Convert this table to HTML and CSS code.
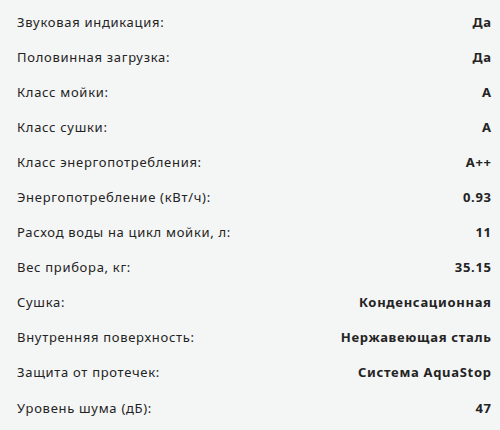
FILE: index.html
```html
<!DOCTYPE html>
<html lang="ru">
<head>
<meta charset="utf-8">
<link rel="stylesheet" href="styles.css">
</head>
<body>
<div class="specs">
  <div class="row"><span class="k">Звуковая индикация:</span><span class="v">Да</span></div>
  <div class="row"><span class="k">Половинная загрузка:</span><span class="v">Да</span></div>
  <div class="row"><span class="k">Класс мойки:</span><span class="v">A</span></div>
  <div class="row"><span class="k">Класс сушки:</span><span class="v">A</span></div>
  <div class="row"><span class="k">Класс энергопотребления:</span><span class="v">A++</span></div>
  <div class="row"><span class="k">Энергопотребление (кВт/ч):</span><span class="v">0.93</span></div>
  <div class="row"><span class="k">Расход воды на цикл мойки, л:</span><span class="v">11</span></div>
  <div class="row"><span class="k">Вес прибора, кг:</span><span class="v">35.15</span></div>
  <div class="row"><span class="k">Сушка:</span><span class="v">Конденсационная</span></div>
  <div class="row"><span class="k">Внутренняя поверхность:</span><span class="v">Нержавеющая сталь</span></div>
  <div class="row"><span class="k">Защита от протечек:</span><span class="v">Система AquaStop</span></div>
  <div class="row"><span class="k">Уровень шума (дБ):</span><span class="v">47</span></div>
</div>
</body>
</html>
```
FILE: styles.css
```css
html, body {
  margin: 0;
  padding: 0;
  background: #f4f5f5;
}
body {
  font-family: "Noto Sans", "DejaVu Sans", sans-serif;
  font-size: 13px;
  color: #232323;
}
.specs {
  display: flex;
  flex-direction: column;
  padding: 4px 9px 0 17px;
}
.row {
  display: flex;
  justify-content: space-between;
  align-items: center;
  height: 35.1px;
}
.k {
  letter-spacing: 0.7px;
}
.v {
  font-weight: 700;
  letter-spacing: 0.7px;
  margin-right: -0.7px;
}
```
